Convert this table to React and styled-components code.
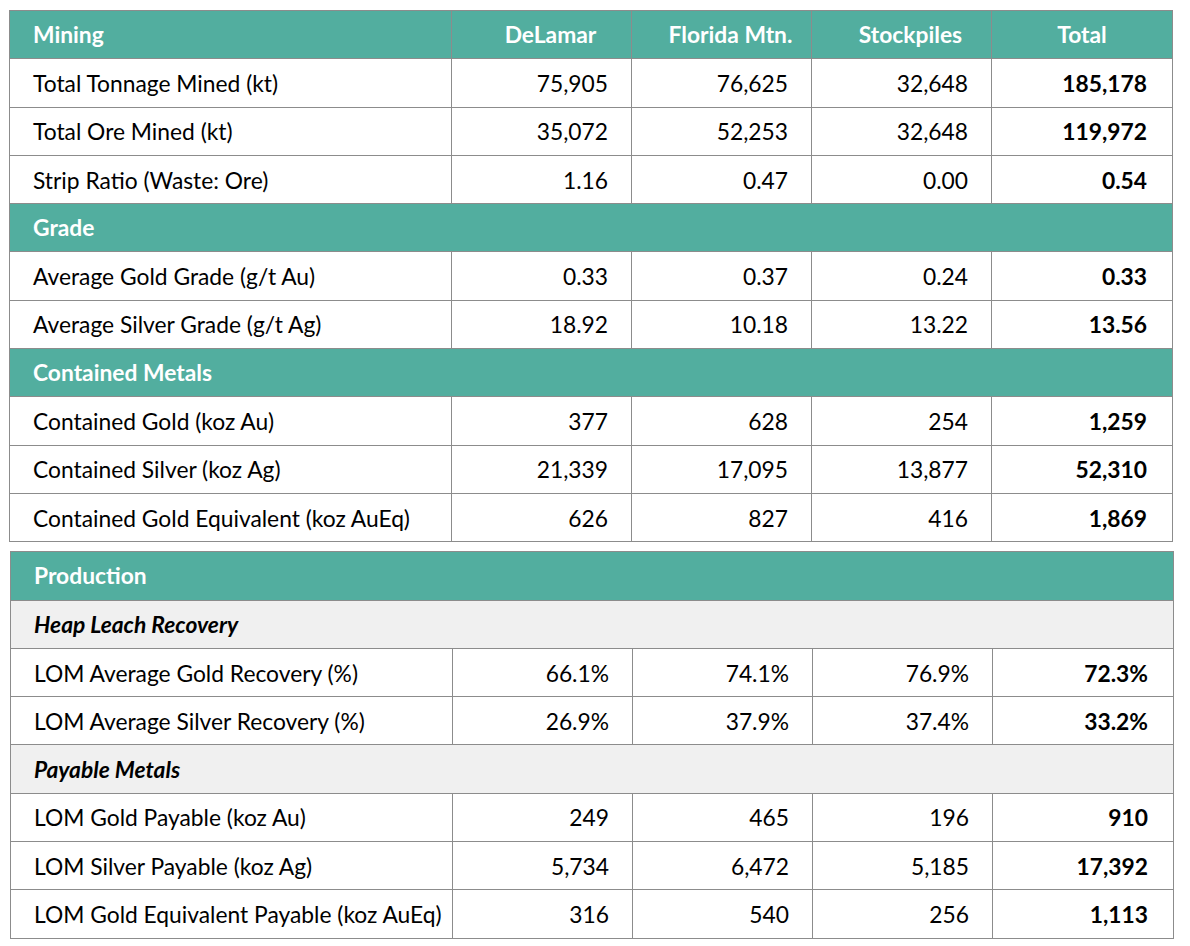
import React from 'react';
import styled, { createGlobalStyle } from 'styled-components';

const GlobalStyle = createGlobalStyle`
    body {
        margin: 0;
        background: #FFFFFF;
        font-family: Lato, "Open Sans", sans-serif;
    }
`

const miningRows = [
    { type: 'head', cells: ['Mining', 'DeLamar', 'Florida Mtn.', 'Stockpiles', 'Total'] },
    { cells: ['Total Tonnage Mined (kt)', '75,905', '76,625', '32,648', '185,178'] },
    { cells: ['Total Ore Mined (kt)', '35,072', '52,253', '32,648', '119,972'] },
    { cells: ['Strip Ratio (Waste: Ore)', '1.16', '0.47', '0.00', '0.54'] },
    { type: 'section', label: 'Grade' },
    { cells: ['Average Gold Grade (g/t Au)', '0.33', '0.37', '0.24', '0.33'] },
    { cells: ['Average Silver Grade (g/t Ag)', '18.92', '10.18', '13.22', '13.56'] },
    { type: 'section', label: 'Contained Metals' },
    { cells: ['Contained Gold (koz Au)', '377', '628', '254', '1,259'] },
    { cells: ['Contained Silver (koz Ag)', '21,339', '17,095', '13,877', '52,310'] },
    { cells: ['Contained Gold Equivalent (koz AuEq)', '626', '827', '416', '1,869'] },
]

const productionRows = [
    { type: 'section', label: 'Production' },
    { type: 'sub', label: 'Heap Leach Recovery' },
    { cells: ['LOM Average Gold Recovery (%)', '66.1%', '74.1%', '76.9%', '72.3%'] },
    { cells: ['LOM Average Silver Recovery (%)', '26.9%', '37.9%', '37.4%', '33.2%'] },
    { type: 'sub', label: 'Payable Metals' },
    { cells: ['LOM Gold Payable (koz Au)', '249', '465', '196', '910'] },
    { cells: ['LOM Silver Payable (koz Ag)', '5,734', '6,472', '5,185', '17,392'] },
    { cells: ['LOM Gold Equivalent Payable (koz AuEq)', '316', '540', '256', '1,113'] },
]

const DataTable = ({ rows, offset }) => (
    <Table $offset={offset}>
        <colgroup>
            <col style={{ width: 442 }} />
            <col style={{ width: 180 }} />
            <col style={{ width: 180 }} />
            <col style={{ width: 180 }} />
            <col />
        </colgroup>
        <tbody>
            {rows.map((row, i) => {
                if (row.type === 'section') {
                    return (
                        <Row key={i}>
                            <SectionCell colSpan={5}>{row.label}</SectionCell>
                        </Row>
                    )
                }
                if (row.type === 'sub') {
                    return (
                        <Row key={i}>
                            <SubCell colSpan={5}>{row.label}</SubCell>
                        </Row>
                    )
                }
                if (row.type === 'head') {
                    return (
                        <Row key={i}>
                            {row.cells.map((c, j) => (
                                <HeadCell key={j} $pos={j}>{c}</HeadCell>
                            ))}
                        </Row>
                    )
                }
                return (
                    <Row key={i}>
                        {row.cells.map((c, j) => (
                            <Cell key={j} $num={j > 0} $total={j === 4}>{c}</Cell>
                        ))}
                    </Row>
                )
            })}
        </tbody>
    </Table>
)

const App = () => {
    return (
        <Page>
            <GlobalStyle />
            <DataTable rows={miningRows} />
            <DataTable rows={productionRows} offset />
        </Page>
    )
}

const Page = styled.div`
    display: flex;
    flex-direction: column;
    gap: 9px;
    padding: 10px 0 0 9px;
`

const Table = styled.table`
    border-collapse: collapse;
    table-layout: fixed;
    width: 1164px;
    margin-left: ${({ $offset }) => ($offset ? '1px' : '0')};
    font-size: 22.8px;
    color: #000000;
`

const Row = styled.tr`
    height: 48.3px;
`

const Cell = styled.td`
    border: 1px solid #8C8C8C;
    padding: 0 ${({ $total }) => ($total ? '25px' : '23px')} 0 23px;
    text-align: ${({ $num }) => ($num ? 'right' : 'left')};
    font-weight: ${({ $total }) => ($total ? 700 : 400)};
    white-space: nowrap;
`

const HeadCell = styled.td`
    border: 1px solid #8C8C8C;
    background: #52AE9F;
    color: #FFFFFF;
    font-weight: 700;
    white-space: nowrap;
    text-align: ${({ $pos }) => ($pos === 0 ? 'left' : 'center')};
    padding: ${({ $pos }) => ($pos === 0 ? '0 23px 2px' : $pos === 4 ? '0 0 2px' : '0 6px 2px 24px')};
`

const SectionCell = styled.td`
    border: 1px solid #8C8C8C;
    background: #52AE9F;
    color: #FFFFFF;
    font-weight: 700;
    padding: 0 23px 2px;
`

const SubCell = styled.td`
    border: 1px solid #8C8C8C;
    background: #F0F0F0;
    font-weight: 700;
    font-style: italic;
    padding: 0 23px;
`

export default App
